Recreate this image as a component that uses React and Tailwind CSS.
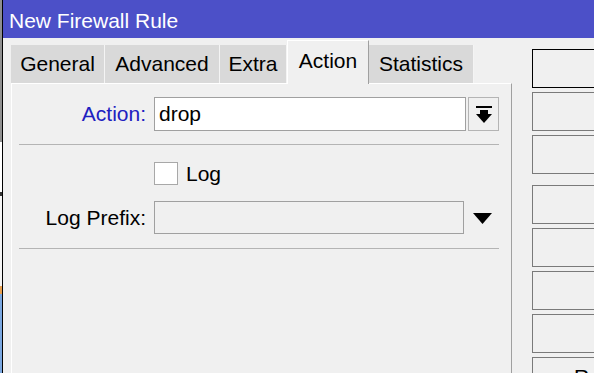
import React from "react";

const tabs = [
	{ label: "General", w: "w-[94px]" },
	{ label: "Advanced", w: "w-[115px]" },
	{ label: "Extra", w: "w-[67px]" },
	{ label: "Action", w: "w-[82px]", active: true },
	{ label: "Statistics", w: "w-[105px]" },
];

const SideButton = ({ first, children }) => (
	<div
		className={`h-[39px] w-[130px] shrink-0 flex items-start pl-[41px] pt-[8px] text-[21px] leading-none bg-[#f0f0f0] border ${
			first ? "border-black" : "border-[#7a7a7a]"
		}`}
	>
		{children}
	</div>
);

const App = () => {
	return (
		<div className="w-[594px] h-[373px] overflow-hidden flex font-['Liberation_Sans',Arial,sans-serif] text-black">
			{/* bits of whatever sits behind the window */}
			<div className="w-[2px] shrink-0 flex flex-col">
				<div className="h-[142px] bg-[#8f8f8f]" />
				<div className="h-[50px] bg-white" />
				<div className="h-[4px] bg-[#333]" />
				<div className="h-[90px] bg-[#f4f4f4]" />
				<div className="h-[8px] bg-[#e8a050]" />
				<div className="flex-1 bg-[#7aa7e0]" />
			</div>
			<div className="w-px shrink-0 bg-black" />

			<div className="flex-1 flex flex-col bg-[#f0f0f0] min-w-0">
				<div className="h-[38px] shrink-0 bg-[#4c50c8] text-white text-[21px] pl-[6px] pt-[4px] flex items-center">
					New Firewall Rule
				</div>

				<div className="flex-1 flex pl-[8px]">
					<div className="w-[501px] shrink-0 flex flex-col">
						<div className="h-[45px] flex items-end">
							{tabs.map((t, i) =>
								t.active ? (
									<div
										key={i}
										className={`${t.w} h-[44px] -mb-px relative z-10 bg-[#f0f0f0] border-t border-l border-white border-r border-r-[#a0a0a0] flex items-center justify-center pb-[4px] text-[21px]`}
									>
										{t.label}
									</div>
								) : (
									<div
										key={i}
										className={`${t.w} h-[38px] bg-[#d9d9d9] border-r border-[#f4f4f4] flex items-center justify-center text-[21px]`}
									>
										{t.label}
									</div>
								)
							)}
						</div>

						<div className="flex-1 bg-[#f0f0f0] border-t border-l border-white border-r border-r-[#a0a0a0] pl-px flex flex-col">
							<div className="mt-[13px] h-[34px] flex items-center">
								<div className="w-[133px] text-right text-[21px] text-[#2020c0]">Action:</div>
								<div className="ml-[8px] w-[312px] h-full bg-white border border-[#a0a0a0] flex items-center pl-[4px] text-[21px]">
									drop
								</div>
								<div className="ml-[2px] w-[31px] h-full border border-[#b4b4b4] bg-[#f0f0f0] flex items-center justify-center">
									<svg width="16" height="17" viewBox="0 0 16 17">
										<rect x="0" y="0" width="16" height="2" fill="#000" />
										<rect x="4" y="4" width="8" height="4" fill="#000" />
										<polygon points="0,8 16,8 8,17" fill="#000" />
									</svg>
								</div>
							</div>

							<div className="mt-[13px] ml-[6px] mr-[12px] h-px bg-[#b4b4b4]" />

							<div className="mt-[17px] h-[23px] flex items-center">
								<div className="ml-[141px] w-[24px] h-[23px] bg-white border border-[#a8a8a8]" />
								<div className="ml-[8px] text-[21px]">Log</div>
							</div>

							<div className="mt-[16px] h-[33px] flex items-center">
								<div className="w-[133px] text-right text-[21px]">Log Prefix:</div>
								<div className="ml-[8px] w-[310px] h-full bg-[#f0f0f0] border border-[#a0a0a0]" />
								<svg className="ml-[9px] mt-[2px]" width="19" height="11" viewBox="0 0 19 11">
									<polygon points="0,0 19,0 9.5,11" fill="#000" />
								</svg>
							</div>

							<div className="mt-[14px] ml-[6px] mr-[12px] h-px bg-[#b4b4b4]" />
						</div>
					</div>

					<div className="ml-[20px] pt-[11px] flex flex-col gap-[4px]">
						<SideButton first />
						<SideButton />
						<SideButton />
						<div className="h-[3px]" />
						<SideButton />
						<SideButton />
						<SideButton />
						<SideButton />
						<SideButton>Reset Counters</SideButton>
					</div>
				</div>
			</div>
		</div>
	);
};

export default App;
